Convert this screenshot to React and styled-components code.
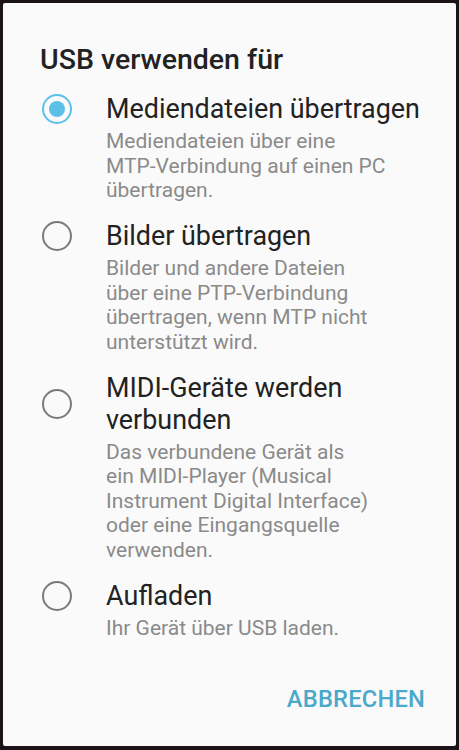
import React from "react";
import styled, { createGlobalStyle } from "styled-components";

const Global = createGlobalStyle`
  html, body { margin: 0; padding: 0; }
  body { background: #1c1318; font-family: Roboto, "Noto Sans", sans-serif; }
`;

const Page = styled.div`
  width: 459px;
  height: 750px;
  box-sizing: border-box;
  padding: 3px 3px 4px 3px;
  display: flex;
`;

const Dialog = styled.div`
  flex: 1;
  background: #fafafa;
  border-radius: 2px;
  display: flex;
  flex-direction: column;
  padding: 40px 0 0 0;
`;

const Title = styled.h1`
  margin: 0 0 16px 37px;
  font-size: 28.5px;
  line-height: 34px;
  font-weight: 500;
  color: #222;
`;

const List = styled.div`
  display: flex;
  flex-direction: column;
  gap: 17.5px;
`;

const Option = styled.label`
  display: grid;
  grid-template-columns: 103px 1fr;
  align-items: start;
`;

const RadioWrap = styled.div`
  height: ${(p) => p.$h}px;
  display: flex;
  align-items: center;
  padding-left: 39px;
`;

const Radio = styled.span`
  box-sizing: border-box;
  width: 30px;
  height: 30px;
  border-radius: 50%;
  border: 2px solid ${(p) => (p.$on ? "#5cc1e9" : "#7a7a7a")};
  display: flex;
  align-items: center;
  justify-content: center;
  &::after {
    content: "";
    width: 16px;
    height: 16px;
    border-radius: 50%;
    background: #5cc1e9;
    display: ${(p) => (p.$on ? "block" : "none")};
  }
`;

const Texts = styled.div`
  display: flex;
  flex-direction: column;
`;

const OptTitle = styled.div`
  font-size: 26.9px;
  line-height: 32px;
  color: #222;
`;

const Desc = styled.div`
  margin-top: 4px;
  font-size: 21px;
  line-height: 24.5px;
  color: #8a8a8a;
`;

const Line = styled.span`
  display: block;
  white-space: nowrap;
`;

const Footer = styled.div`
  margin-top: auto;
  display: flex;
  justify-content: flex-end;
  padding: 0 31px 33px 0;
`;

const Button = styled.button`
  border: none;
  background: none;
  padding: 0;
  font-family: Roboto, sans-serif;
  font-size: 23.7px;
  font-weight: 500;
  color: #4aa9cb;
  letter-spacing: 0.2px;
`;

const options = [
  {
    title: ["Mediendateien übertragen"],
    desc: ["Mediendateien über eine", "MTP-Verbindung auf einen PC", "übertragen."],
    on: true,
  },
  {
    title: ["Bilder übertragen"],
    desc: ["Bilder und andere Dateien", "über eine PTP-Verbindung", "übertragen, wenn MTP nicht", "unterstützt wird."],
  },
  {
    title: ["MIDI-Geräte werden", "verbunden"],
    desc: [
      "Das verbundene Gerät als",
      "ein MIDI-Player (Musical",
      "Instrument Digital Interface)",
      "oder eine Eingangsquelle",
      "verwenden.",
    ],
  },
  {
    title: ["Aufladen"],
    desc: ["Ihr Gerät über USB laden."],
  },
];

export default function App() {
  return (
    <>
      <Global />
      <Page>
        <Dialog>
          <Title>USB verwenden für</Title>
          <List>
            {options.map((o, i) => (
              <Option key={i}>
                <RadioWrap $h={o.title.length * 32}>
                  <Radio $on={o.on} />
                </RadioWrap>
                <Texts>
                  <OptTitle>
                    {o.title.map((t, j) => (
                      <Line key={j}>{t}</Line>
                    ))}
                  </OptTitle>
                  <Desc>
                    {o.desc.map((t, j) => (
                      <Line key={j}>{t}</Line>
                    ))}
                  </Desc>
                </Texts>
              </Option>
            ))}
          </List>
          <Footer>
            <Button>ABBRECHEN</Button>
          </Footer>
        </Dialog>
      </Page>
    </>
  );
}
